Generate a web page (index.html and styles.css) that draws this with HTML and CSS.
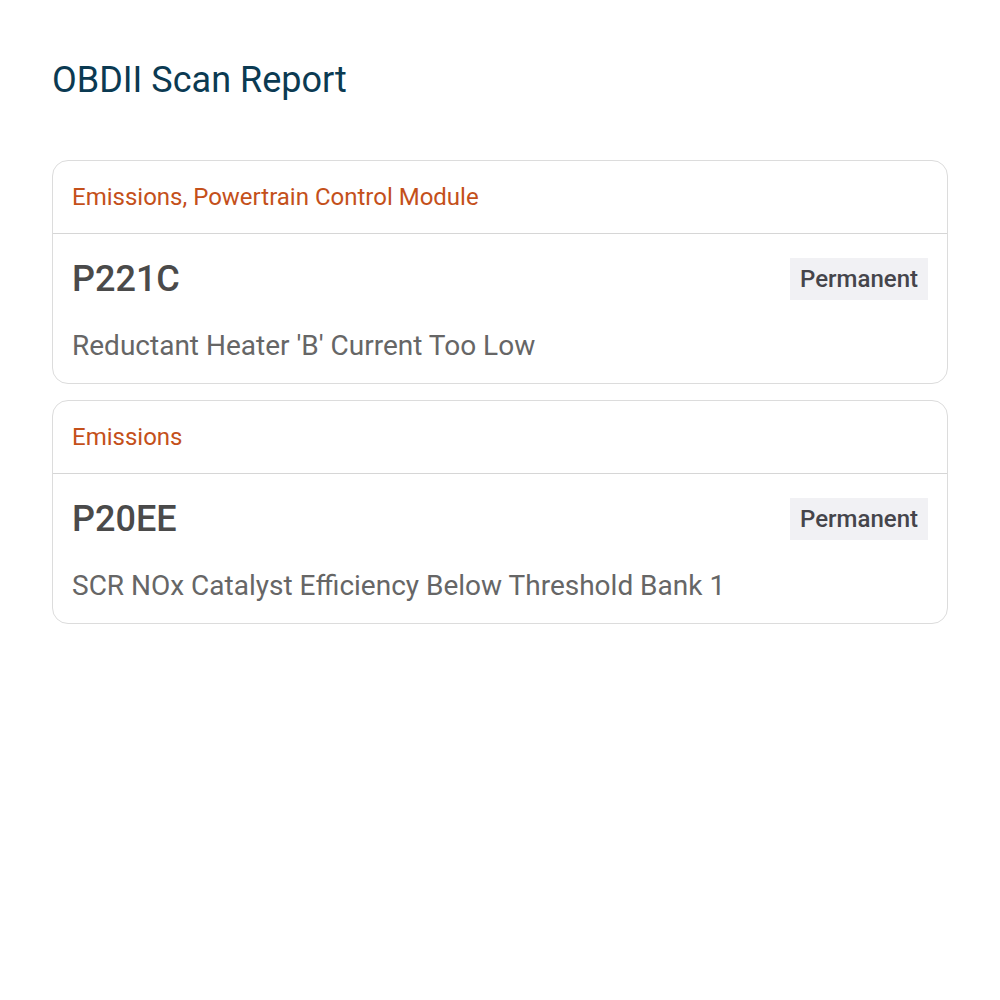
FILE: index.html
```html
<!DOCTYPE html>
<html lang="en">
<head>
<meta charset="utf-8">
<title>OBDII Scan Report</title>
<link rel="stylesheet" href="styles.css">
</head>
<body>
<main class="report">
  <h1 class="report-title">OBDII Scan Report</h1>
  <section class="dtc-list">
    <article class="dtc-card">
      <header class="dtc-header">Emissions, Powertrain Control Module</header>
      <div class="dtc-body">
        <div class="dtc-row">
          <span class="dtc-code">P221C</span>
          <span class="dtc-badge">Permanent</span>
        </div>
        <p class="dtc-desc">Reductant Heater 'B' Current Too Low</p>
      </div>
    </article>
    <article class="dtc-card">
      <header class="dtc-header">Emissions</header>
      <div class="dtc-body">
        <div class="dtc-row">
          <span class="dtc-code">P20EE</span>
          <span class="dtc-badge">Permanent</span>
        </div>
        <p class="dtc-desc">SCR NOx Catalyst Efficiency Below Threshold Bank 1</p>
      </div>
    </article>
  </section>
</main>
</body>
</html>
```

FILE: styles.css
```css
html, body {
  margin: 0;
  padding: 0;
  background: #ffffff;
  font-family: Roboto, "Liberation Sans", sans-serif;
}

.report {
  padding: 56px 52px;
}

.report-title {
  margin: 0 0 56px;
  font-size: 36px;
  font-weight: 400;
  line-height: 48px;
  color: #0b3a52;
}

.dtc-list {
  display: flex;
  flex-direction: column;
  gap: 16px;
}

.dtc-card {
  border: 1px solid #dcdcdc;
  border-radius: 16px;
  overflow: hidden;
}

.dtc-header {
  padding: 0 19px;
  height: 72px;
  display: flex;
  align-items: center;
  border-bottom: 1px solid #d6d6d6;
  font-size: 24px;
  color: #c4501a;
}

.dtc-body {
  padding: 24px 19px 19px;
}

.dtc-row {
  display: flex;
  justify-content: space-between;
  align-items: center;
}

.dtc-code {
  font-size: 36px;
  line-height: 42px;
  font-weight: 500;
  color: #4a4a4a;
}

.dtc-badge {
  background: #f1f1f4;
  color: #45454b;
  font-size: 24px;
  font-weight: 500;
  padding: 0 10px;
  height: 42px;
  display: flex;
  align-items: center;
}

.dtc-desc {
  margin: 28px 0 0;
  font-size: 28px;
  line-height: 36px;
  color: #666666;
}
```
